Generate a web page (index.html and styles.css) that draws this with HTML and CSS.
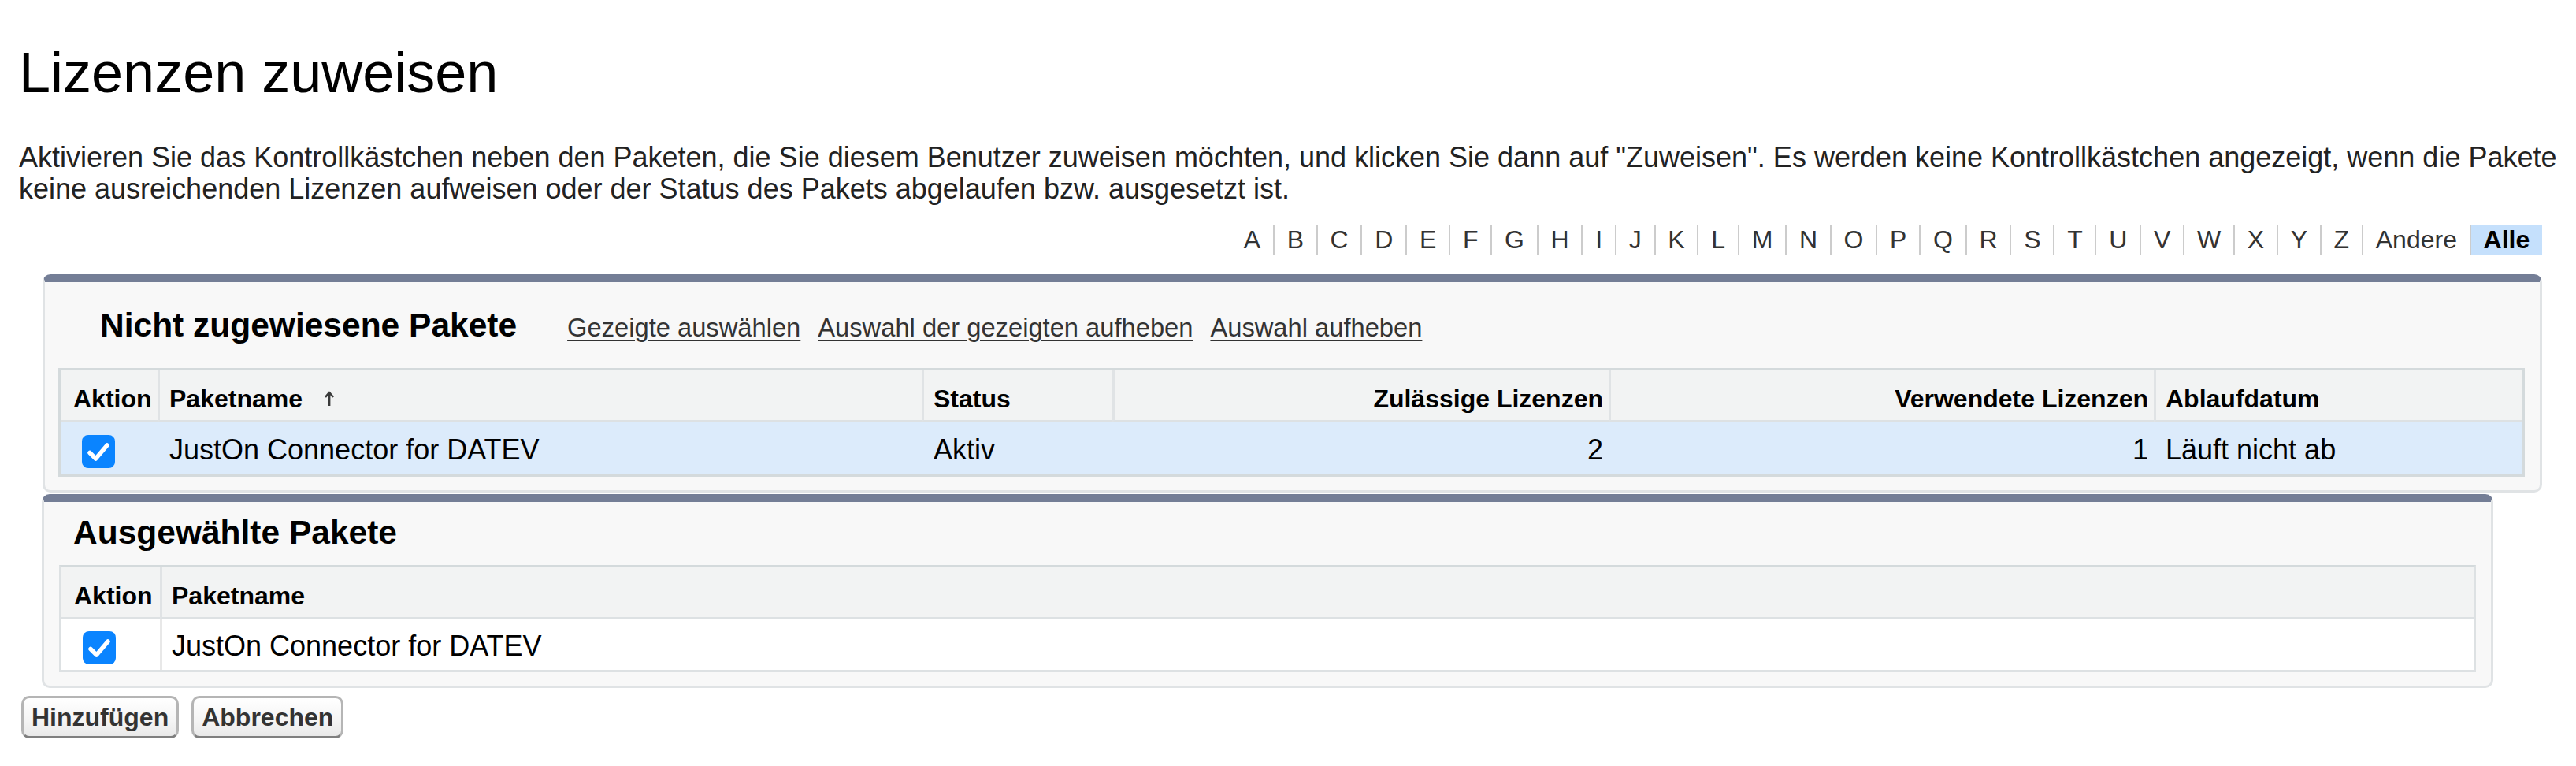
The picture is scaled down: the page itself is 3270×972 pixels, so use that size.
FILE: index.html
```html
<!DOCTYPE html>
<html lang="de">
<head>
<meta charset="utf-8">
<title>Lizenzen zuweisen</title>
<link rel="stylesheet" href="styles.css">
</head>
<body>
<div class="page">
  <h1 class="title">Lizenzen zuweisen</h1>
  <p class="intro">Aktivieren Sie das Kontrollkästchen neben den Paketen, die Sie diesem Benutzer zuweisen möchten, und klicken Sie dann auf "Zuweisen". Es werden keine Kontrollkästchen angezeigt, wenn die Pakete keine ausreichenden Lizenzen aufweisen oder der Status des Pakets abgelaufen bzw. ausgesetzt ist.</p>

  <div class="alpha">
    <span class="alpha-item">A</span><span class="alpha-item">B</span><span class="alpha-item">C</span><span class="alpha-item">D</span><span class="alpha-item">E</span><span class="alpha-item">F</span><span class="alpha-item">G</span><span class="alpha-item">H</span><span class="alpha-item">I</span><span class="alpha-item">J</span><span class="alpha-item">K</span><span class="alpha-item">L</span><span class="alpha-item">M</span><span class="alpha-item">N</span><span class="alpha-item">O</span><span class="alpha-item">P</span><span class="alpha-item">Q</span><span class="alpha-item">R</span><span class="alpha-item">S</span><span class="alpha-item">T</span><span class="alpha-item">U</span><span class="alpha-item">V</span><span class="alpha-item">W</span><span class="alpha-item">X</span><span class="alpha-item">Y</span><span class="alpha-item">Z</span><span class="alpha-item">Andere</span><span class="alpha-item alpha-active">Alle</span>
  </div>

  <section class="panel panel-unassigned">
    <div class="panel-head head-unassigned">
      <h2 class="panel-title">Nicht zugewiesene Pakete</h2>
      <a class="panel-link first-link" href="#">Gezeigte auswählen</a>
      <a class="panel-link" href="#">Auswahl der gezeigten aufheben</a>
      <a class="panel-link" href="#">Auswahl aufheben</a>
    </div>
    <div class="grid grid-unassigned">
      <div class="th th-first">Aktion</div>
      <div class="th">Paketname<svg class="sort-arrow" width="18" height="22" viewBox="0 0 18 22"><path d="M9 21V4.5" stroke="#3a3a3a" stroke-width="2.8" fill="none"/><path d="M4 10L9 4 14 10" stroke="#3a3a3a" stroke-width="2.6" fill="none" stroke-linejoin="round"/></svg></div>
      <div class="th">Status</div>
      <div class="th th-right">Zulässige Lizenzen</div>
      <div class="th th-right">Verwendete Lizenzen</div>
      <div class="th">Ablaufdatum</div>

      <div class="td td-check sel"><span class="checkbox"><svg width="42" height="42" viewBox="0 0 42 42"><rect x="0" y="0" width="42" height="42" rx="8" fill="#0a84ff"/><path d="M10 22.5L17.5 30 32 13" stroke="#fff" stroke-width="5.5" fill="none" stroke-linecap="round" stroke-linejoin="round"/></svg></span></div>
      <div class="td sel">JustOn Connector for DATEV</div>
      <div class="td sel">Aktiv</div>
      <div class="td sel td-right">2</div>
      <div class="td sel td-right">1</div>
      <div class="td sel">Läuft nicht ab</div>
    </div>
  </section>

  <section class="panel panel-selected">
    <div class="panel-head head-selected">
      <h2 class="panel-title">Ausgewählte Pakete</h2>
    </div>
    <div class="grid grid-selected">
      <div class="th th-first">Aktion</div>
      <div class="th">Paketname</div>

      <div class="td td-check td-short"><span class="checkbox"><svg width="42" height="42" viewBox="0 0 42 42"><rect x="0" y="0" width="42" height="42" rx="8" fill="#0a84ff"/><path d="M10 22.5L17.5 30 32 13" stroke="#fff" stroke-width="5.5" fill="none" stroke-linecap="round" stroke-linejoin="round"/></svg></span></div>
      <div class="td td-short td-divided">JustOn Connector for DATEV</div>
    </div>
  </section>

  <div class="buttons">
    <button class="btn" type="button">Hinzufügen</button>
    <button class="btn" type="button">Abbrechen</button>
  </div>
</div>
</body>
</html>
```

FILE: styles.css
```css
* { box-sizing: border-box; }

html, body {
  margin: 0;
  padding: 0;
  background: #ffffff;
}

body {
  font-family: "Liberation Sans", Arial, Helvetica, sans-serif;
  color: #000;
}

.page {
  padding: 0 24px;
}

.title {
  margin: 0;
  padding-top: 56px;
  font-size: 72px;
  line-height: 72px;
  font-weight: normal;
  color: #000;
}

.intro {
  margin: 52px 0 0;
  font-size: 36px;
  line-height: 40px;
  color: #222;
}

.alpha {
  display: flex;
  justify-content: flex-end;
  margin: 26px 19px 0 0;
  font-size: 32px;
  line-height: 37px;
  color: #333;
}

.alpha-item {
  padding: 0 15.8px;
}

.alpha-item + .alpha-item {
  border-left: 2px solid #cccccc;
}

.alpha-active {
  background: #c5e0fc;
  font-weight: bold;
  color: #000;
}

.panel {
  background: #f8f8f8;
  border: 3px solid #e0e3e5;
  border-top: 10px solid #747e96;
  border-radius: 10px;
}

.panel-unassigned {
  margin: 25px 19px 0 30px;
  padding: 30px 19px 17px 17px;
}

.panel-selected {
  margin: 2px 81px 0 29px;
  padding: 14px 19px 17px 19px;
}

.panel-head {
  display: flex;
  align-items: baseline;
  height: 50px;
}

.head-unassigned {
  padding-left: 53px;
  margin-bottom: 29px;
}

.head-selected {
  padding-left: 18px;
  margin-bottom: 16px;
}

.panel-title {
  margin: 0;
  font-size: 42.5px;
  line-height: 50px;
  font-weight: bold;
  color: #000;
}

.panel-link {
  font-size: 32.7px;
  color: #333;
  text-decoration: underline;
  text-decoration-thickness: 2px;
  text-underline-offset: 4px;
  margin-left: 22px;
}

.panel-link.first-link {
  margin-left: 64px;
}

.grid {
  display: grid;
}

.grid-unassigned {
  border: 3px solid #d4dadc;
  grid-template-columns: 123px 970px 242px 630px 692px 1fr;
}

.grid-selected {
  border: 3px solid #dde1e3;
  border-top-color: #d4dadc;
  grid-template-columns: 125px 1fr;
}

.th {
  height: 66px;
  padding: 18px 7px 0 12px;
  background: #f2f3f3;
  border-bottom: 3px solid #dde1e3;
  border-left: 3px solid #e0e3e5;
  font-size: 32px;
  line-height: 36px;
  font-weight: bold;
  color: #000;
  white-space: nowrap;
  display: flex;
  align-items: flex-start;
}

.th-first {
  border-left: none;
  padding-left: 16px;
}

.th-right {
  justify-content: flex-end;
}

.sort-arrow {
  margin-left: 25px;
  margin-top: 6px;
  flex: none;
}

.td {
  height: 66px;
  padding: 4px 7px 0 15px;
  font-size: 36px;
  line-height: 40px;
  color: #000;
  display: flex;
  align-items: center;
  white-space: nowrap;
}

.td.sel {
  background: #dcebfb;
}

.td-right {
  justify-content: flex-end;
}

.td-check {
  padding-top: 0;
  padding-left: 27px;
}

.td-short {
  height: 64px;
  background: #ffffff;
}

.td-divided {
  border-left: 3px solid #e8e8e8;
  padding-left: 12px;
}

.checkbox {
  display: block;
  width: 42px;
  height: 42px;
  margin-top: 8px;
}

.checkbox svg {
  display: block;
}

.buttons {
  display: flex;
  gap: 16px;
  margin: 10px 0 0 3px;
}

.btn {
  height: 54px;
  padding: 0 10px;
  font-family: "Liberation Sans", Arial, Helvetica, sans-serif;
  font-size: 32px;
  font-weight: bold;
  color: #333;
  background: linear-gradient(#ffffff, #f4f4f4 60%, #e9e9e9);
  border: 3px solid #b5b5b5;
  border-bottom-color: #7f7f7f;
  border-radius: 10px;
}
```
